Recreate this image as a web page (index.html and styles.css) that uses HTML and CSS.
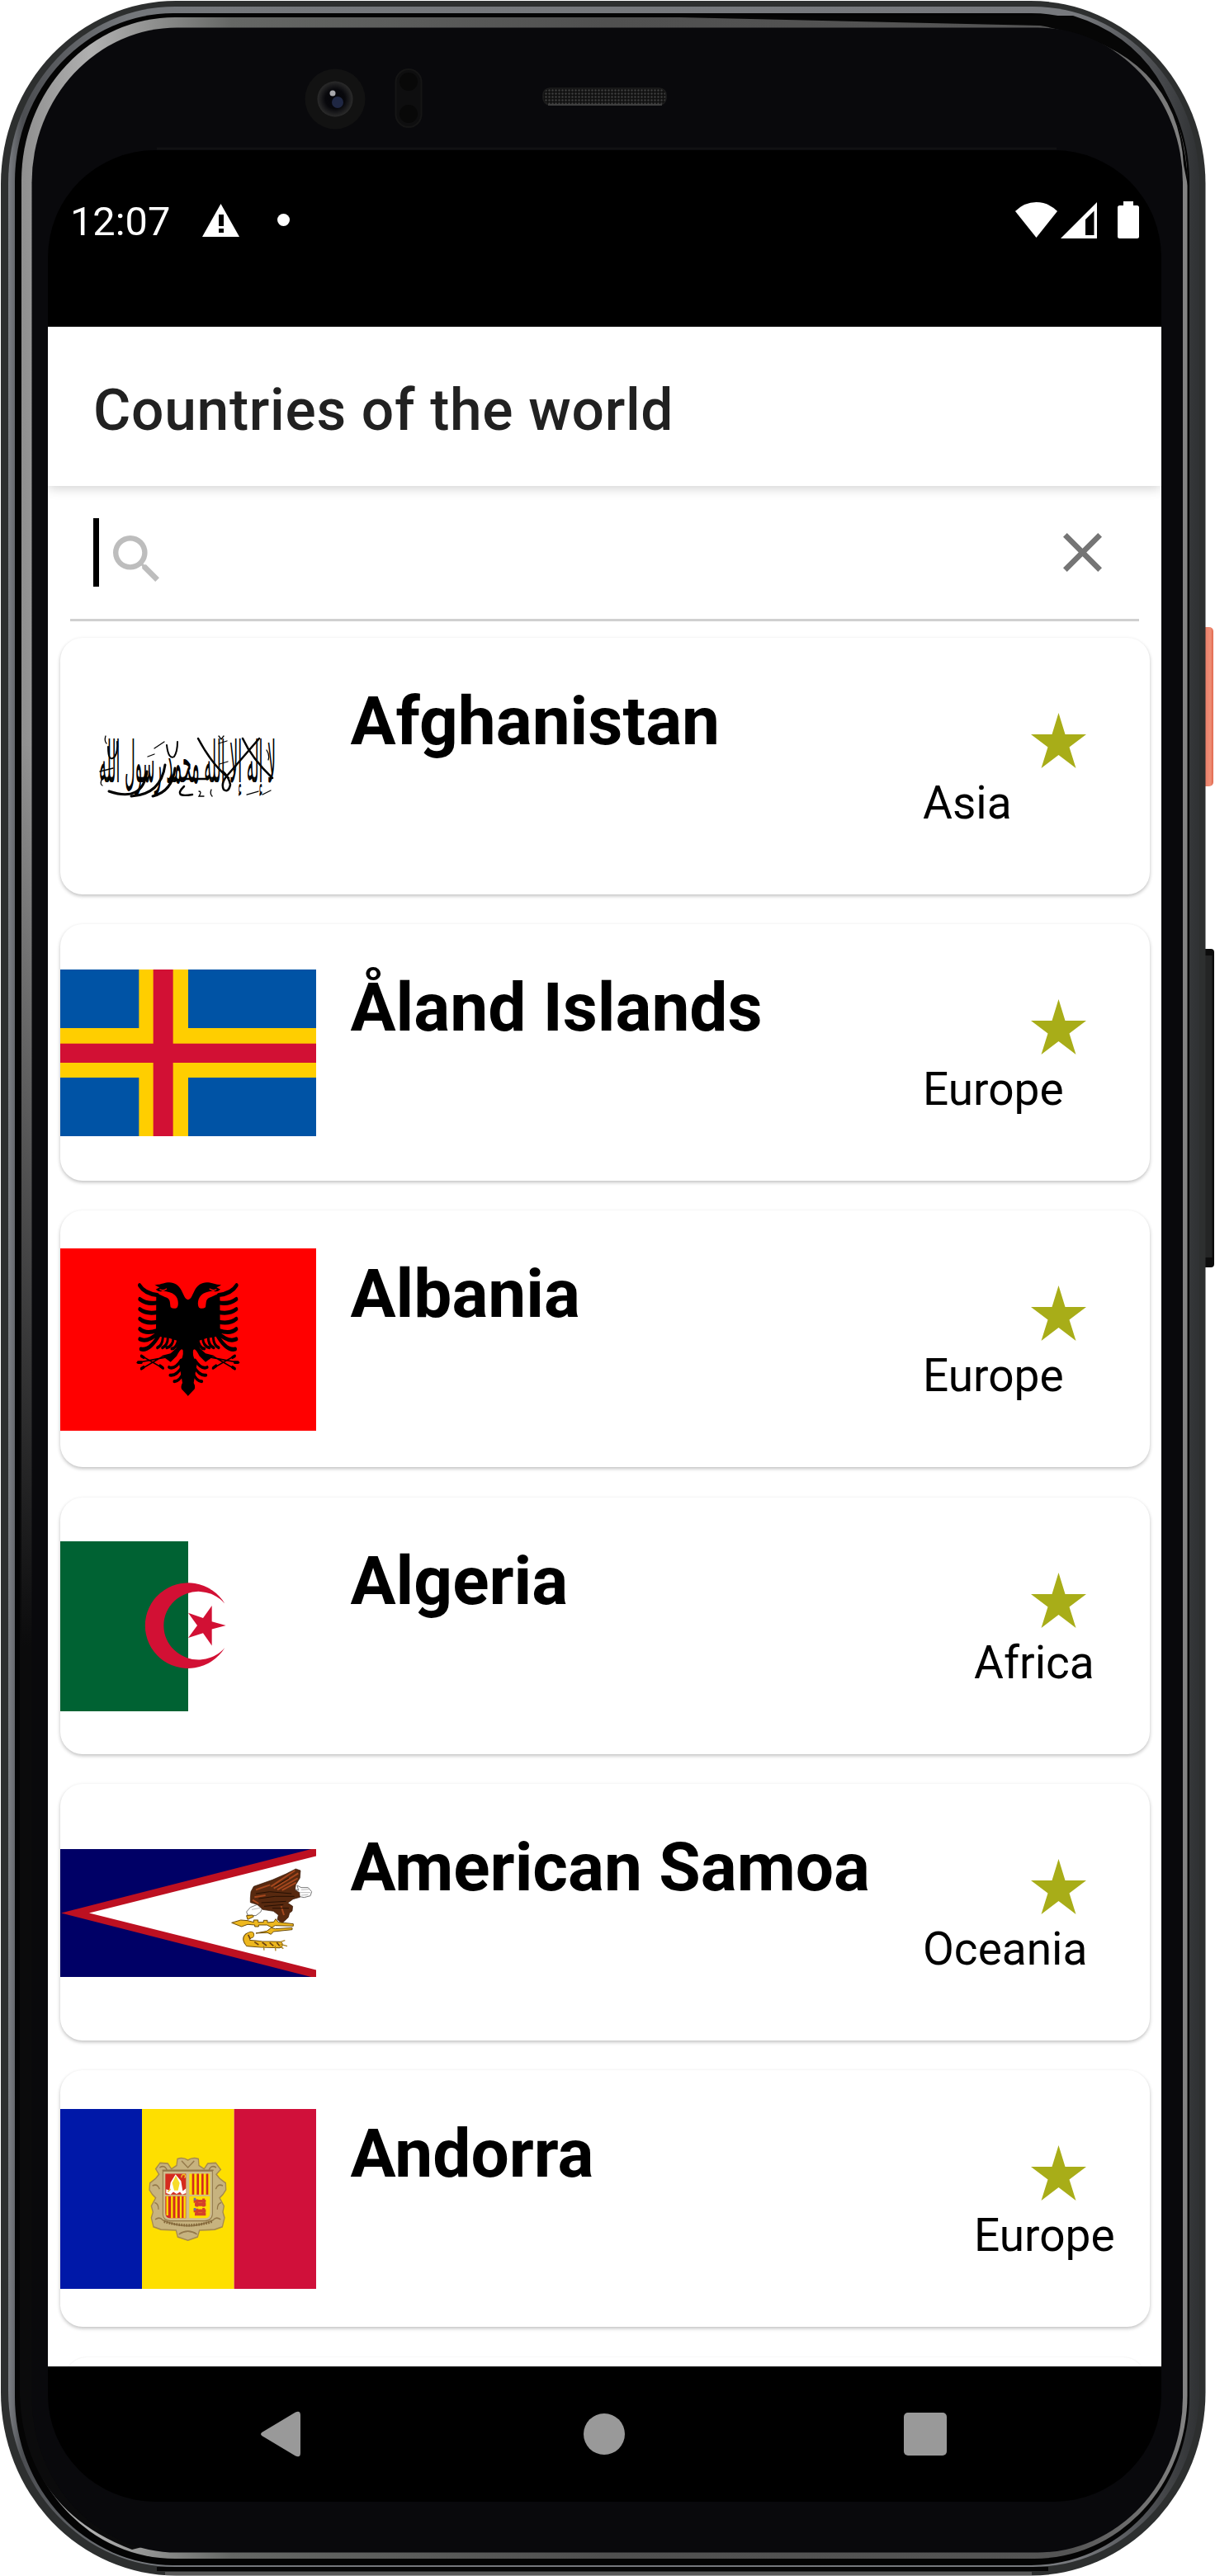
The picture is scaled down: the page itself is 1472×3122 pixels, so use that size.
FILE: index.html
```html
<!DOCTYPE html>
<html lang="en">
<head>
<meta charset="utf-8">
<title>Countries of the world</title>
<link rel="stylesheet" href="styles.css">
</head>
<body>
<div class="phone">
  <svg class="chassis" viewBox="0 0 1472 3122" aria-hidden="true">
    <defs>
      <linearGradient id="rim" x1="0" x2="1" y1="0" y2="0">
        <stop offset="0" stop-color="#7c7f84"/><stop offset=".012" stop-color="#4c4e52"/><stop offset=".1" stop-color="#74777b"/>
        <stop offset=".9" stop-color="#77797d"/><stop offset=".97" stop-color="#45474a"/><stop offset="1" stop-color="#2f3133"/>
      </linearGradient>
      <linearGradient id="bevel" x1="0" x2="1" y1="0" y2="0">
        <stop offset="0" stop-color="#8f8f8f"/><stop offset=".06" stop-color="#b0b0b0"/><stop offset=".18" stop-color="#656765"/>
        <stop offset=".5" stop-color="#505050"/><stop offset=".9" stop-color="#555"/><stop offset="1" stop-color="#838383"/>
      </linearGradient>
      <linearGradient id="fade" x1="0" x2="0" y1="0" y2="1">
        <stop offset="0" stop-color="#0b0b0c" stop-opacity="0"/><stop offset=".5" stop-color="#0b0b0c"/><stop offset="1" stop-color="#0b0b0c"/>
      </linearGradient>
      <linearGradient id="power" x1="0" x2="1" y1="0" y2="0">
        <stop offset="0" stop-color="#cf5e47"/><stop offset=".35" stop-color="#e8806a"/><stop offset=".75" stop-color="#f08e76"/><stop offset="1" stop-color="#e0694f"/>
      </linearGradient>
      <radialGradient id="lens"><stop offset="0" stop-color="#05050a"/><stop offset=".55" stop-color="#08080c"/><stop offset="1" stop-color="#2b2b2b"/></radialGradient>
      <pattern id="mesh" width="4" height="4" patternUnits="userSpaceOnUse"><rect width="4" height="4" fill="#111"/><circle cx="1.5" cy="1.5" r="1.2" fill="#3d3d3d"/></pattern>
    </defs>
    <rect x="1455" y="760" width="15" height="193" rx="5" fill="url(#power)"/>
    <rect x="1455" y="1150" width="16" height="386" rx="4" fill="#0c0c0c"/>
    <rect x="1455" y="1158" width="13.500" height="366" fill="#242525"/>
    <rect x="1" y="1" width="1459.500" height="3120.500" rx="212" ry="222" fill="#2d2f2f"/>
    <path d="M200 3119H1250" stroke="#5a5a5a" stroke-width="4"/>
    <rect x="10" y="8" width="1443" height="3103" rx="202" ry="214" fill="url(#rim)"/>
    <path d="M190 3113.500H1270" stroke="#060606" stroke-width="5"/>
    <rect x="18" y="16" width="1423" height="3093" rx="192" ry="204" fill="#040404"/>
    <rect x="26" y="21" width="1412.500" height="3080" rx="186" ry="198" fill="url(#bevel)"/>
    <path d="M780 20L1300 19Q1432 60 1440 230L1434 200Q1426 60 1260 31Z" fill="#060606"/>
    <path d="M24 900V2900Q28 3040 160 3090L200 3080L40 2900V900Z" fill="url(#fade)"/>
    <rect x="38.500" y="33.500" width="1394.500" height="3060" rx="176" ry="188" fill="#09090c"/>
    <rect x="58" y="182" width="1349" height="2850" rx="130" fill="#000"/>
    <path d="M190 180H1280" stroke="#111113" stroke-width="3"/>
    <ellipse cx="406" cy="120" rx="36.500" ry="36.500" fill="#121212"/>
    <circle cx="406" cy="120" r="21.500" fill="url(#lens)"/>
    <circle cx="409" cy="124" r="7" fill="#1f2743"/>
    <circle cx="403" cy="113" r="3.500" fill="#a9a9ad"/>
    <rect x="479.500" y="84" width="31" height="70" rx="15.500" fill="#0e0e0f" stroke="#151515" stroke-width="2"/>
    <circle cx="495" cy="99" r="11" fill="#080808"/><circle cx="495" cy="138" r="11" fill="#080808"/>
    <rect x="658" y="107" width="149" height="20" rx="8" fill="url(#mesh)" stroke="#1c1c1c" stroke-width="1.500"/>
    <path d="M664 127H802" stroke="#4b4b4b" stroke-width="1.500"/>
  </svg>

  <main class="screen">
    <div class="status">
      <span class="clock">12:07</span>
      <svg class="warn" viewBox="0 0 45 40"><path d="M22.500 0L45 40H0Z" fill="#fff"/><path d="M20 13h6v14h-6zM20 30h6v5h-6z" fill="#000"/></svg>
      <span class="dot"></span>
      <svg class="signals" viewBox="0 0 150 46" fill="#fff">
        <path d="M25.500 44L0 12Q11 1 25.500 1T51 12Z"/>
        <path fill-rule="evenodd" d="M99 1V45H55ZM85 22V41H95.500V11.500Z"/>
        <path d="M131 0h12v5h4.500q2.500 0 2.500 2.500v35q0 2.500-2.500 2.500h-21q-2.500 0-2.500-2.500V7.500q0-2.500 2.500-2.500h4.500z"/>
      </svg>
    </div>

    <div class="app">
      <header class="appbar"><h1>Countries of the world</h1></header>
      <div class="search">
        <span class="caret"></span>
        <svg class="glass" viewBox="3 3 17.500 17.500"><path d="M15.500 14h-.79l-.28-.27A6.471 6.471 0 0 0 16 9.500 6.500 6.500 0 1 0 9.500 16c1.610 0 3.090-.59 4.230-1.570l.27.28v.79l5 4.990L20.490 19l-4.990-5zm-6 0C7.010 14 5 11.990 5 9.500S7.010 5 9.500 5 14 7.010 14 9.500 11.990 14 9.500 14z" fill="#bdbdbd"/></svg>
        <svg class="close" viewBox="5 5 14 14"><path d="M19 6.410L17.590 5 12 10.590 6.410 5 5 6.410 10.590 12 5 17.590 6.410 19 12 13.410 17.590 19 19 17.590 13.410 12z" fill="#757575"/></svg>
      </div>

      <div class="list">
        <article class="card">
          <div class="flag">
            <svg height="155" viewBox="0 0 310 155" class="script">
              <text x="47" y="0" transform="translate(0 97) scale(1 2.050)" textLength="214" lengthAdjust="spacingAndGlyphs">لا إله إلا الله محمد رسول الله</text>
              <g fill="none" stroke="#000" stroke-width="3" stroke-linecap="round">
                <path d="M59 108Q100 122 105 84M86 114Q122 112 127 76M112 114Q136 108 139 80" />
                <path d="M167 44Q184 76 204 92M241 44L203 88Q194 98 198 106Q204 110 206 100Q204 90 197 84M221 44Q232 68 257 92" stroke-width="2.500"/>
                <path d="M58 54Q58 74 66 66Q70 60 69 48M129 52Q131 70 138 66Q142 60 142 48" stroke-width="2"/>
                <path d="M146 93H179M150 102Q136 116 160 112" stroke-width="2.500"/>
                <path d="M48 84L64 80M114 56L126 48M106 66l8-3M192 50l10-3M193 75l10-3M226 112l14-4M245 112l10-5" stroke-width="1.300"/>
                <path d="M55 41q-2 6 1 9M50 94q-2 6 1 7M192 41l3 4 3-4M168 108q4 0 0 6h6M183 106q-2 5 1 8M250 58q4 6 2 12" stroke-width="1.300"/>
              </g>
            </svg>
          </div>
          <h2>Afghanistan</h2>
          <div class="info"><svg class="star"><use href="#star"/></svg><p>Asia</p></div>
        </article>

        <article class="card">
          <div class="flag">
            <svg height="202" viewBox="39 192 930 606" preserveAspectRatio="none">
              <path fill="#0053a5" d="M39 192h930v606H39z"/>
              <path fill="#ffce00" d="M325 192h179v606H325zM39 405h930v180H39z"/>
              <path fill="#d21034" d="M377 192h72v606h-72zM39 461h930v70H39z"/>
            </svg>
          </div>
          <h2>Åland Islands</h2>
          <div class="info"><svg class="star"><use href="#star"/></svg><p>Europe</p></div>
        </article>

        <article class="card">
          <div class="flag">
            <svg height="221" viewBox="39 78 930 525" preserveAspectRatio="none">
              <path fill="#f00" d="M39 78h930v525H39z"/>
              <defs>
                <g id="half-eagle">
                  <path d="M504 226C492 225 488 212 480 200C470 182 450 174 430 176C410 178 400 184 382 182Q390 188 400 190L386 196Q400 206 412 200C430 203 446 206 455 212C470 222 470 243 463 249Q450 254 440 247C437 232 440 222 420 218L388 206L387 320Q400 338 430 335L470 345L460 366L440 380L408 387L440 405L462 388Q480 360 485 372Q488 395 470 405L483 465Q476 475 480 483L504 503Z"/>
                  <g fill="none" stroke="#000" stroke-width="12" stroke-linecap="round">
                    <path d="M392 212Q345 208 327 184M392 234Q355 240 328 224M392 262Q352 268 328 253M392 290Q350 296 328 281M392 314Q350 326 328 310M394 322Q355 350 328 339M400 325Q365 374 332 368"/>
                    <path d="M412 335Q410 358 392 364M430 335Q430 356 410 364M450 338Q448 360 426 364M468 340Q462 366 444 367M478 400Q455 428 434 420M482 418Q462 446 438 443M486 436Q472 462 453 461" stroke-width="9"/>
                    <path d="M420 392L318 407M415 424L332 386M410 390L332 426" stroke-width="4"/>
                    <path d="M322 406h12M334 388l8 4M334 424l8-4M402 416l10 6" stroke-width="9"/>
                  </g>
                  <path d="M400 196q12 6 26-2" fill="none" stroke="#f00" stroke-width="3"/>
                </g>
              </defs>
              <use href="#half-eagle"/>
              <use href="#half-eagle" transform="matrix(-1 0 0 1 1007 0)"/>
            </svg>
          </div>
          <h2>Albania</h2>
          <div class="info"><svg class="star"><use href="#star"/></svg><p>Europe</p></div>
        </article>

        <article class="card">
          <div class="flag">
            <svg height="206" viewBox="39 922 930 489" preserveAspectRatio="none">
              <path fill="#fff" d="M39 922h930v489H39z"/>
              <path fill="#006233" d="M39 922h465v489H39z"/>
              <path fill="#d21034" d="M637 1101A156 123 0 1 0 637 1228A126 98 0 1 1 637 1101ZM641 1164L590 1153V1107L558 1143L504 1128L537 1164L504 1200L558 1186L590 1222V1175Z"/>
            </svg>
          </div>
          <h2>Algeria</h2>
          <div class="info far"><svg class="star"><use href="#star"/></svg><p>Africa</p></div>
        </article>

        <article class="card">
          <div class="flag">
            <svg height="155" viewBox="0 0 310 155">
              <path fill="#006" d="M0 0h310v155H0z"/>
              <path fill="#bd1021" d="M1 77.500L304 0H310V155H304Z"/>
              <path fill="#fff" d="M35 77.500L310 8.600V146.400Z"/>
              <g transform="translate(177 -20) scale(.3333)">
                <path fill="#fff" stroke="#777" stroke-width="3" d="M318 205L335 210L330 192L345 200L370 200L383 215L378 230L355 236L335 232ZM185 262L205 270L198 288L180 302L150 300L146 288L160 272Z"/>
                <path fill="none" stroke="#999" stroke-width="2" d="M335 218H378M345 208L374 206M345 228L370 226M165 280L195 274"/>
                <path fill="#58290f" stroke="#331606" stroke-width="2" d="M162 215L172 196L240 172L290 150L325 132L342 138L340 165L325 190L322 208L338 218L340 235L315 242L296 256L314 268L312 285L302 293L298 308L275 330L258 316L262 300L244 286L205 280L185 262L160 254L160 238Z"/>
                <path fill="none" stroke="#a5471d" stroke-width="6" d="M235 196L322 138M245 203L334 148M258 208L332 166M275 210L326 182M180 208L232 190M175 235L215 228M272 268L282 300M168 245L190 258"/>
                <path fill="none" stroke="#251003" stroke-width="3" d="M180 222L230 215L310 222M190 240L250 232L320 232M200 255L290 250M210 268L280 262M240 275L300 275M250 195L300 165"/>
                <path fill="#eeb81f" stroke="#6a4a0a" stroke-width="3" d="M92 328L125 318L150 320L172 326V318H188V326H208V319H222V327L245 325L252 314L262 326L316 332V340L250 338L238 345L220 336H190V342H176V336L150 334L128 342ZM146 302L168 300L172 306L150 316ZM180 366L220 358L236 346L250 350L312 346V353L244 360L235 370L222 364Z"/>
                <path fill="none" stroke="#6a4a0a" stroke-width="25" stroke-linecap="round" d="M162 372Q134 380 152 402Q180 404 200 406L266 408"/>
                <path fill="none" stroke="#edb71e" stroke-width="20" stroke-linecap="round" d="M162 372Q136 380 152 402Q180 404 200 406L266 408"/>
                <path fill="none" stroke="#6a4212" stroke-width="5" d="M152 372l8 16M175 398l15 10M203 399l16 12M230 400l14 12M256 400l10 12"/>
                <path fill="none" stroke="#a8821f" stroke-width="4" d="M268 398L286 392M270 406L294 413M265 412L280 422M208 412L210 428M250 412L252 430"/>
              </g>
            </svg>
          </div>
          <h2>American Samoa</h2>
          <div class="info"><svg class="star"><use href="#star"/></svg><p>Oceania</p></div>
        </article>

        <article class="card">
          <div class="flag">
            <svg height="218" viewBox="39 872 930 534" preserveAspectRatio="none">
              <path fill="#0018a8" d="M39 872h297v534H39z"/>
              <path fill="#fedf00" d="M336 872h335v534H336z"/>
              <path fill="#d0103a" d="M671 872h298v534H671z"/>
              <path fill="#c7b37f" stroke="#a58a4f" stroke-width="4" d="M465 1020Q485 1014 503 1024Q520 1014 541 1020L543 1040L562 1050L575 1034L604 1032L622 1052L606 1066L618 1078L640 1092L641 1112L630 1126L618 1136L634 1160L630 1178L636 1195L628 1222L600 1230L545 1232L538 1252L503 1262L466 1252L460 1232L405 1230L378 1222L370 1195L376 1178L370 1160L386 1136L374 1126L363 1112L365 1092L386 1078L398 1066L386 1050L402 1032L430 1034L443 1050L462 1040Z"/>
              <path fill="none" stroke="#94794a" stroke-width="4" d="M480 1026L503 1046L526 1026M400 1046q20-10 28 10M606 1046q-20-10-28 10M374 1100q18-8 26 10M630 1100q-18-8-26 10M382 1150q14 2 14 20M624 1150q-14 2-14 20M384 1200Q400 1190 412 1202Q503 1236 594 1202Q606 1190 622 1200M470 1244q33-18 66 0M410 1054H596"/>
              <path fill="none" stroke="#84683a" stroke-width="8" stroke-dasharray="5 4" d="M416 1206Q503 1228 592 1206"/>
              <path fill="#cfbd8d" stroke="#8f7548" stroke-width="3" d="M412 1056H592V1185Q590 1203 565 1204H438Q414 1203 412 1185Z"/>
              <path fill="#d52b1e" d="M421 1064h75v62h-75zM421 1131h75v65h-60q-15-2-15-15z"/>
              <path fill="#fedf00" d="M508 1064h75v62h-75zM508 1131h75v50q0 13-15 15h-60z"/>
              <path stroke="#d52b1e" stroke-width="8" d="M522 1064v62M539 1064v62M556 1064v62M573 1064v62"/>
              <path stroke="#fedf00" stroke-width="7" d="M428 1131v57M445 1131v65M461 1131v65M477 1131v65M491 1131v65"/>
              <path fill="#fff" d="M440 1090l18-24 20 20 6 30 12-8v14l-14 4-8-8-12 6-12-6-10 8-16-4v-12l12 4z"/>
              <path fill="#f7dc2b" d="M446 1092l13-22 14 22-6 22h-14z"/>
              <path fill="none" stroke="#f2c320" stroke-width="4" d="M480 1076q-2-10 10-10q8 6 0 10M430 1118l10-8"/>
              <path fill="none" stroke="#d5402a" stroke-width="9" d="M524 1146h44M528 1156h40M524 1174h44M528 1184h40M536 1140v22M560 1138v24M536 1168v20M560 1166v22"/>
              <path fill="#6673a8" d="M524 1136h8v7h-8zM524 1166h8v7h-8z"/>
            </svg>
          </div>
          <h2>Andorra</h2>
          <div class="info far"><svg class="star"><use href="#star"/></svg><p>Europe</p></div>
        </article>

        <article class="card next"></article>
      </div>
    </div>

    <nav class="nav">
      <svg class="back" viewBox="0 0 49 56"><path d="M3 25.500L43 1.500Q49-1 49 5V51Q49 57 43 54.500L3 30.500Q-1 28 3 25.500Z" fill="#999"/></svg>
      <span class="home"></span>
      <span class="recent"></span>
    </nav>
  </main>
</div>

<svg width="0" height="0" class="defs"><symbol id="star" viewBox="0 0 67 67"><path d="M0 26H25.500L33.500 0L41.500 26H67L46.500 41.500L54.500 67L33.500 51L12.500 67L20.500 41.500Z" fill="#a8ad18"/></symbol></svg>
</body>
</html>
```
FILE: styles.css
```css
* { box-sizing: border-box; }
body { margin: 0; background: #fff; font-family: Roboto, sans-serif; color: #000; }
h1, h2, p { margin: 0; }
svg { display: block; flex: none; }
.defs { position: absolute; }

.phone { position: relative; width: 1472px; height: 3122px; padding: 182px 65px 90px 58px; overflow: hidden; }
.chassis { position: absolute; left: 0; top: 0; width: 1472px; height: 3122px; }
.screen { position: relative; display: flex; flex-direction: column; width: 1349px; height: 2850px; }

.status { display: flex; align-items: center; height: 214px; padding: 0 27px 45px 27px; }
.clock { font-size: 48.700px; line-height: 58px; margin-top: 5px; color: #fff; }
.warn { width: 45px; height: 40px; margin-left: 39px; }
.dot { width: 15px; height: 15px; border-radius: 50%; background: #fff; margin-left: 46px; }
.signals { width: 150px; height: 46px; margin-left: auto; }

.app { height: 2472px; background: #fff; overflow: hidden; }
.appbar { position: relative; height: 193px; padding: 61px 55px 0; background: #fff; box-shadow: 0 2px 14px rgba(0, 0, 0, .2); }
h1 { font-size: 69.500px; line-height: 82px; font-weight: 500; letter-spacing: .7px; color: #212121; }

.search { display: flex; align-items: center; height: 164px; margin: 0 27px; padding: 0 45px 0 28px; border-bottom: 3px solid #d0d0d0; }
.caret { width: 7px; height: 83px; background: #000; }
.glass { width: 56px; height: 56px; margin: 14px 0 0 17px; }
.close { width: 47px; height: 47px; margin-left: auto; }

.list { display: flex; flex-direction: column; gap: 36.400px; padding: 19.500px 14px 0 15px; }
.card { display: flex; flex: none; height: 311px; border-radius: 27px; background: #fff; box-shadow: 0 2px 4px rgba(0, 0, 0, .25); }
.card.next { margin: 0 5px; box-shadow: 0 0 2px rgba(0, 0, 0, .1); }
.flag { width: 310px; display: flex; align-items: center; padding-top: 1px; }
.flag svg { width: 310px; }
.script { font-family: "DejaVu Sans", sans-serif; font-size: 34px; }
h2 { flex: 1; white-space: nowrap; padding: 53px 0 0 41.500px; font-size: 82px; line-height: 96px; font-weight: 700; }
.info { width: 275px; padding-top: 91px; }
.info.far { width: 213px; }
.star { width: 67px; height: 67px; margin: 0 77px 0 auto; }
.info p { margin-top: 10px; font-size: 55px; line-height: 64px; }

.nav { display: flex; align-items: center; height: 164px; padding: 0 260px 0 257px; justify-content: space-between; }
.back { width: 49px; height: 56px; }
.home { width: 50px; height: 50px; border-radius: 50%; background: #999; margin-left: 4px; }
.recent { width: 52px; height: 52px; border-radius: 5px; background: #999; }
```
